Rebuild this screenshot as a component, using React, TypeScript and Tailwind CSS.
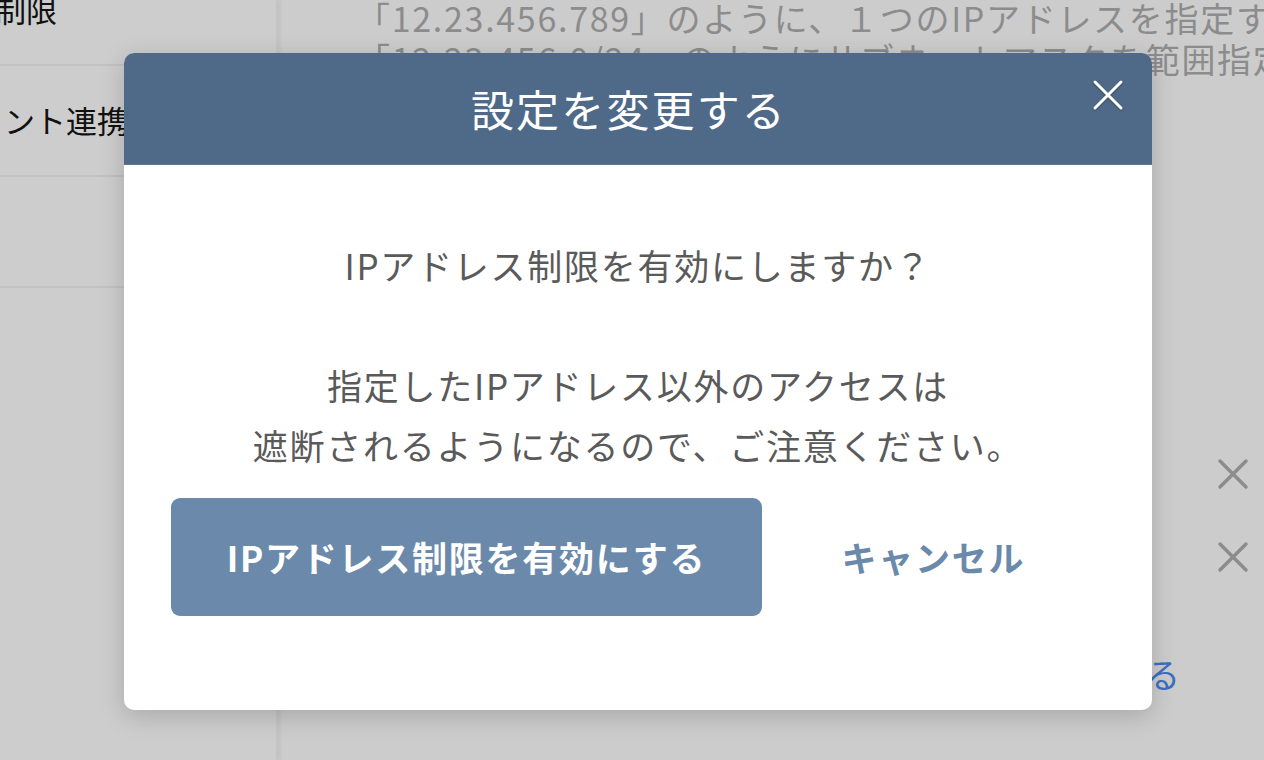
const sideRows = [
  { label: '制限', offset: '-ml-[5px]' },
  { label: 'ント連携', offset: 'ml-[4px]' },
  { label: '', offset: '' },
];

function CloseGlyph({ className }: { className?: string }) {
  return (
    <svg viewBox="0 0 32 32" className={className} fill="none" stroke="currentColor" strokeLinecap="round">
      <path d="M3 3 L29 29 M29 3 L3 29" />
    </svg>
  );
}

export default function App() {
  return (
    <div className="relative h-[760px] w-[1264px] overflow-hidden bg-[#cccccc] font-['Noto_Sans_CJK_JP',sans-serif]">
      {/* page behind the dialog */}
      <div className="flex h-full">
        <aside className="w-[278px] shrink-0 border-r-2 border-[#c4c4c4] bg-[#cdcdcd] shadow-[2px_0_4px_rgba(0,0,0,0.06)]">
          <div className="-mt-[45px]">
            {sideRows.map((row, i) => (
              <div
                key={i}
                className="flex h-[111px] items-center border-b-2 border-[#c2c2c2] text-[31px] text-[#111]"
              >
                <span className={`whitespace-nowrap ${row.offset}`}>{row.label}</span>
              </div>
            ))}
          </div>
        </aside>

        <main className="relative flex min-w-0 flex-1 flex-col">
          <div className="-mt-[3px] pl-[78px] text-[34px] leading-[41px] tracking-[0.05em] text-[#8c8c8c] whitespace-nowrap">
            <p>「12.23.456.789」のように、１つのIPアドレスを指定す</p>
            <p>「12.23.456.0/24」のようにサブネットマスクを範囲指定</p>
          </div>

          <div className="mt-[379px] flex flex-col items-end gap-[51px] pr-[15px] text-[#8c8c8c]">
            <CloseGlyph className="h-[32px] w-[32px] stroke-[3.5]" />
            <CloseGlyph className="h-[32px] w-[32px] stroke-[3.5]" />
          </div>

          <div className="mt-[81px] flex justify-end pr-[84px] text-[34px] leading-[40px] text-[#3b6fc4]">
            <span className="whitespace-nowrap">設定を変更する</span>
          </div>
        </main>
      </div>

      {/* dialog */}
      <div className="absolute inset-0 pl-[124px] pt-[53px]">
        <div className="flex h-[657px] w-[1028px] flex-col overflow-hidden rounded-[10px] bg-white shadow-[0_6px_24px_rgba(0,0,0,0.18)]">
          <div className="relative flex h-[112px] shrink-0 items-center justify-center border-b border-[#5d7894] bg-[#4e6a88] pr-[18px]">
            <h2 className="text-[43px] tracking-[0.05em] text-white">設定を変更する</h2>
            <button className="absolute right-[28px] top-[26px] text-white drop-shadow-[0_1px_1px_rgba(0,0,0,0.3)]">
              <CloseGlyph className="h-[32px] w-[32px] stroke-[3]" />
            </button>
          </div>

          <div className="flex flex-1 flex-col px-[47px] pt-[70px] text-center text-[35px] leading-[60px] tracking-[0.05em] text-[#5a5a5a]">
            <p>IPアドレス制限を有効にしますか？</p>
            <p className="mt-[60px]">指定したIPアドレス以外のアクセスは</p>
            <p>遮断されるようになるので、ご注意ください。</p>

            <div className="mt-[23px] flex items-center">
              <button className="h-[118px] w-[591px] rounded-[9px] bg-[#6b8aab] text-[35px] font-bold tracking-[0.05em] text-white">
                IPアドレス制限を有効にする
              </button>
              <button className="flex-1 text-[35px] font-bold tracking-[0.05em] text-[#6b8aab]">キャンセル</button>
            </div>
          </div>
        </div>
      </div>
    </div>
  );
}
